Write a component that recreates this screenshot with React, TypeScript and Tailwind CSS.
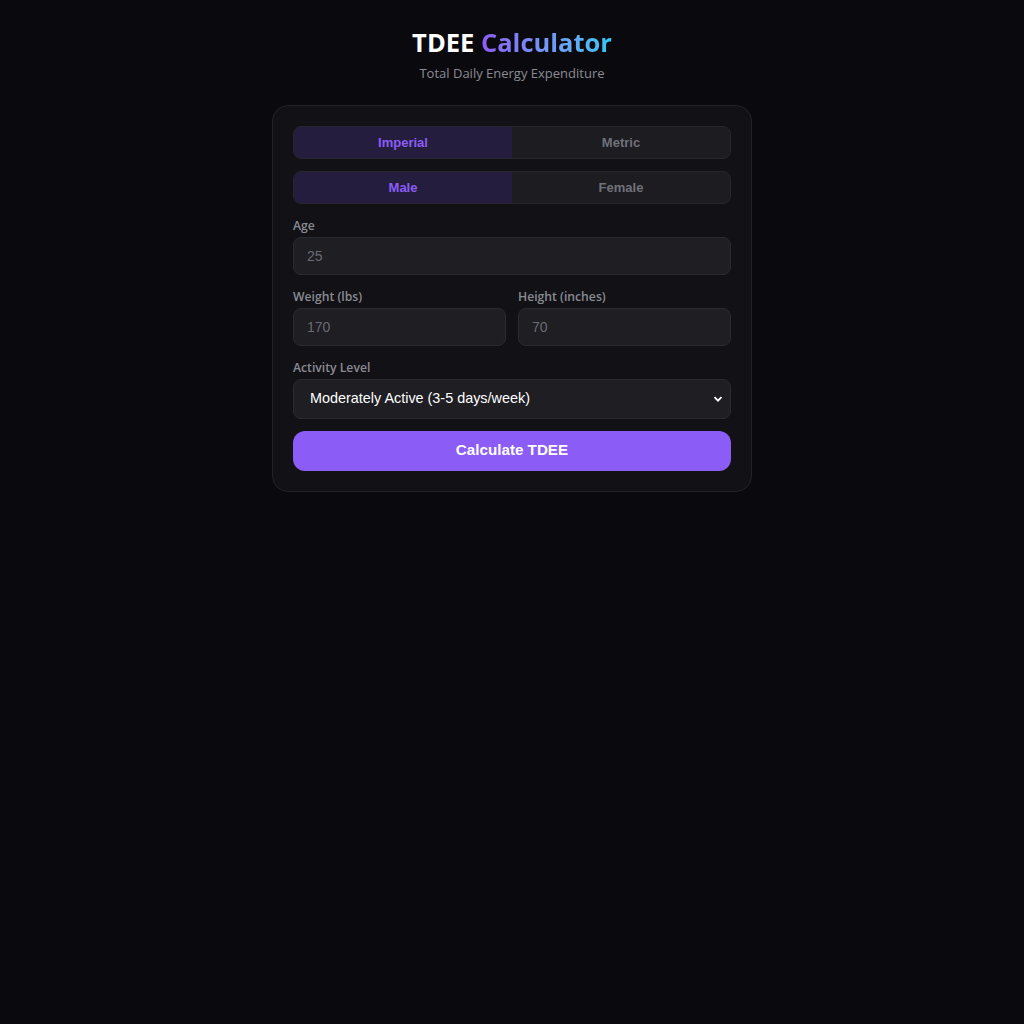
import React, { useState } from "react";

const ui = { fontFamily: '"Open Sans", "Noto Sans", sans-serif' };
const ctrl = { fontFamily: '"Liberation Sans", Arial, sans-serif' };

function Toggle({
  options,
  value,
  onChange,
}: {
  options: string[];
  value: string;
  onChange: (v: string) => void;
}) {
  return (
    <div className="flex h-[33px] rounded-lg border border-[#26262c] bg-[#1c1c21] overflow-hidden">
      {options.map((o) => (
        <button
          key={o}
          type="button"
          onClick={() => onChange(o)}
          style={ctrl}
          className={
            o === value
              ? "flex-1 bg-[#241d3d] text-[#8b5cf6] text-[13px] font-bold leading-[32px]"
              : "flex-1 text-[#71717a] text-[13px] font-bold leading-[32px]"
          }
        >
          {o}
        </button>
      ))}
    </div>
  );
}

function Label({ children }: { children: React.ReactNode }) {
  return (
    <label style={ui} className="text-[12.2px] font-semibold text-[#8a8a92] leading-[17px]">
      {children}
    </label>
  );
}

function Field({ label, value }: { label: string; value: string }) {
  return (
    <div className="flex flex-col gap-[3px]">
      <Label>{label}</Label>
      <input
        type="text"
        placeholder={value}
        style={ctrl}
        className="h-[38px] px-[13px] rounded-lg border border-[#2a2a31] bg-[#1e1e23] text-[14px] text-[#e4e4e7] placeholder-[#6b6b73] outline-none"
      />
    </div>
  );
}

export default function App() {
  const [units, setUnits] = useState("Imperial");
  const [sex, setSex] = useState("Male");

  return (
    <div className="min-h-screen bg-[#0a0a0e] flex flex-col items-center pt-[27px]">
      <h1 style={ui} className="text-[25.5px] font-bold leading-[30px] text-white">
        TDEE{" "}
        <span className="bg-gradient-to-r from-[#8b5cf6] to-[#2ec8f2] bg-clip-text text-transparent">
          Calculator
        </span>
      </h1>
      <p style={ui} className="mt-[7px] text-[13px] text-[#8a8a92]">
        Total Daily Energy Expenditure
      </p>

      <div className="mt-[21px] w-[480px] rounded-2xl border border-[#222228] bg-[#121216] p-5 flex flex-col">
        <Toggle options={["Imperial", "Metric"]} value={units} onChange={setUnits} />
        <div className="mt-3">
          <Toggle options={["Male", "Female"]} value={sex} onChange={setSex} />
        </div>

        <div className="mt-[13px]">
          <Field label="Age" value="25" />
        </div>

        <div className="mt-[13px] grid grid-cols-2 gap-3">
          <Field label="Weight (lbs)" value="170" />
          <Field label="Height (inches)" value="70" />
        </div>

        <div className="mt-[13px] flex flex-col gap-[3px]">
          <Label>Activity Level</Label>
          <div className="relative">
            <select
              style={ctrl}
              defaultValue="moderate"
              className="w-full h-[40px] appearance-none pl-[16px] pr-8 rounded-lg border border-[#2a2a31] bg-[#1e1e23] text-[14.4px] text-white outline-none"
            >
              <option value="sedentary">Sedentary (little or no exercise)</option>
              <option value="light">Lightly Active (1-3 days/week)</option>
              <option value="moderate">Moderately Active (3-5 days/week)</option>
              <option value="very">Very Active (6-7 days/week)</option>
            </select>
            <svg
              className="pointer-events-none absolute right-[8px] top-1/2 -translate-y-1/2"
              width="10"
              height="10"
              viewBox="0 0 10 10"
              fill="none"
            >
              <path d="M1.5 3.2 L5 6.7 L8.5 3.2" stroke="#ffffff" strokeWidth="1.8" />
            </svg>
          </div>
        </div>

        <button
          type="button"
          style={ctrl}
          className="mt-3 h-[40px] rounded-xl bg-[#8b5cf6] text-white text-[15.2px] font-bold"
        >
          Calculate TDEE
        </button>
      </div>
    </div>
  );
}
